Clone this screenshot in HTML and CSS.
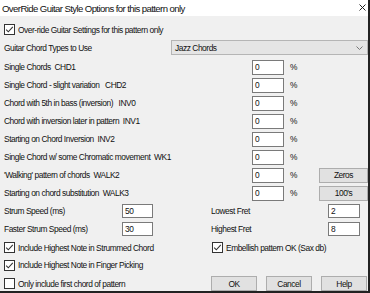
FILE: index.html
```html
<!DOCTYPE html>
<html>
<head>
<meta charset="utf-8">
<link rel="stylesheet" href="styles.css">
</head>
<body>
<div class="dialog">
  <div class="titlebar">
    <span class="title">OverRide Guitar Style Options for this pattern only</span>
    <svg class="close" width="7" height="7" viewBox="0 0 7 7"><path d="M0.5 0.5L6.5 6.5M6.5 0.5L0.5 6.5" stroke="#222" stroke-width="1"/></svg>
  </div>
  <div class="content">
    <label class="check row-override">
      <svg class="box" width="11" height="11" viewBox="0 0 11 11"><rect x="0.5" y="0.5" width="10" height="10" fill="#fff" stroke="#333"/><path d="M2.2 5.6L4.3 7.8L8.8 2.8" fill="none" stroke="#333" stroke-width="1.1"/></svg>
      <span>Over-ride Guitar Settings for this pattern only</span>
    </label>
    <div class="row-types">
      <span class="lbl">Guitar Chord Types to Use</span>
      <div class="select"><span>Jazz Chords</span>
        <svg class="chev" width="7" height="4" viewBox="0 0 7 4"><path d="M0.5 0.5L3.5 3.5L6.5 0.5" fill="none" stroke="#777" stroke-width="1"/></svg>
      </div>
    </div>
    <div class="pct-grid">
      <span class="lbl">Single Chords  CHD1</span><span class="input">0</span><span class="pct">%</span><span></span>
      <span class="lbl">Single Chord - slight variation   CHD2</span><span class="input">0</span><span class="pct">%</span><span></span>
      <span class="lbl">Chord with 5th in bass (inversion)   INV0</span><span class="input">0</span><span class="pct">%</span><span></span>
      <span class="lbl">Chord with inversion later in pattern  INV1</span><span class="input">0</span><span class="pct">%</span><span></span>
      <span class="lbl">Starting on Chord Inversion  INV2</span><span class="input">0</span><span class="pct">%</span><span></span>
      <span class="lbl">Single Chord w/ some Chromatic movement  WK1</span><span class="input">0</span><span class="pct">%</span><span></span>
      <span class="lbl">'Walking' pattern of chords  WALK2</span><span class="input">0</span><span class="pct">%</span><span class="btn">Zeros</span>
      <span class="lbl">Starting on chord substitution  WALK3</span><span class="input">0</span><span class="pct">%</span><span class="btn">100's</span>
    </div>
    <div class="strum-grid">
      <span class="lbl">Strum Speed (ms)</span><span class="input">50</span><span class="lbl">Lowest Fret</span><span class="input">2</span>
      <span class="lbl">Faster Strum Speed (ms)</span><span class="input">30</span><span class="lbl">Highest Fret</span><span class="input">8</span>
    </div>
    <div class="checks">
      <div class="check-row">
        <label class="check first-col">
          <svg class="box" width="11" height="11" viewBox="0 0 11 11"><rect x="0.5" y="0.5" width="10" height="10" fill="#fff" stroke="#333"/><path d="M2.2 5.6L4.3 7.8L8.8 2.8" fill="none" stroke="#333" stroke-width="1.1"/></svg>
          <span>Include Highest Note in Strummed Chord</span>
        </label>
        <label class="check">
          <svg class="box" width="11" height="11" viewBox="0 0 11 11"><rect x="0.5" y="0.5" width="10" height="10" fill="#fff" stroke="#333"/><path d="M2.2 5.6L4.3 7.8L8.8 2.8" fill="none" stroke="#333" stroke-width="1.1"/></svg>
          <span>Embellish pattern OK (Sax db)</span>
        </label>
      </div>
      <div class="check-row">
        <label class="check">
          <svg class="box" width="11" height="11" viewBox="0 0 11 11"><rect x="0.5" y="0.5" width="10" height="10" fill="#fff" stroke="#333"/><path d="M2.2 5.6L4.3 7.8L8.8 2.8" fill="none" stroke="#333" stroke-width="1.1"/></svg>
          <span>Include Highest Note in Finger Picking</span>
        </label>
      </div>
      <div class="check-row last">
        <label class="check">
          <svg class="box" width="11" height="11" viewBox="0 0 11 11"><rect x="0.5" y="0.5" width="10" height="10" fill="#fff" stroke="#333"/></svg>
          <span>Only include first chord of pattern</span>
        </label>
        <div class="buttons">
          <span class="btn">OK</span><span class="btn">Cancel</span><span class="btn">Help</span>
        </div>
      </div>
    </div>
  </div>
</div>
</body>
</html>
```

FILE: styles.css
```css
* { box-sizing: border-box; }
html, body { margin: 0; padding: 0; }
body {
  width: 370px;
  height: 293px;
  overflow: hidden;
  font-family: "Liberation Sans", Arial, sans-serif;
  font-size: 8.4px;
  letter-spacing: -0.45px;
  color: #111;
}
.dialog {
  width: 370px;
  height: 293px;
  background: #f0f0f0;
  border-right: 2px solid #222;
  border-bottom: 2px solid #222;
  display: flex;
  flex-direction: column;
}
.titlebar {
  height: 16px;
  background: #fff;
  display: flex;
  align-items: center;
  justify-content: space-between;
  padding: 0 2px 0 2px;
  flex: none;
}
.title { font-size: 9.6px; letter-spacing: -0.6px; }
.close { margin-top: -2px; }
.content {
  padding: 7px 0 0 4px;
  display: flex;
  flex-direction: column;
  flex: 1;
}
.lbl { white-space: pre; }
.check {
  display: flex;
  align-items: center;
  gap: 3px;
  height: 13px;
  white-space: pre;
}
.box { flex: none; }
.row-types {
  margin-top: 4px;
  height: 15px;
  display: flex;
  align-items: center;
  justify-content: space-between;
}
.select {
  width: 197px;
  height: 15px;
  background: #e5e5e5;
  border: 1px solid #b5b5b5;
  display: flex;
  align-items: center;
  justify-content: space-between;
  padding: 0 4px 0 3px;
}
.pct-grid {
  margin-top: 3px;
  display: grid;
  grid-template-columns: 248px 32px 35px 49px;
  grid-auto-rows: 18px;
  align-items: center;
}
.input {
  height: 15px;
  background: #fff;
  border: 1px solid #7a7a7a;
  padding-left: 2px;
  display: flex;
  align-items: center;
}
.pct { padding-left: 6px; }
.btn {
  height: 15px;
  background: #e1e1e1;
  border: 1px solid #adadad;
  display: flex;
  align-items: center;
  justify-content: center;
}
.strum-grid {
  display: grid;
  grid-template-columns: 118px 31px 58px 117px 32px;
  grid-auto-rows: 18px;
  align-items: center;
}
.strum-grid .lbl:nth-child(3), .strum-grid .lbl:nth-child(7) { grid-column: 3 / 5; padding-left: 58px; }
.strum-grid .input { height: 14px; }
.checks {
  margin-top: 3px;
  display: flex;
  flex-direction: column;
  gap: 4.5px;
}
.check-row {
  display: flex;
  align-items: center;
  height: 13px;
}
.first-col { width: 208px; }
.check-row.last { height: 15px; justify-content: space-between; }
.buttons {
  display: flex;
  gap: 9px;
  margin-right: 1px;
}
.buttons .btn { width: 46px; }
```
